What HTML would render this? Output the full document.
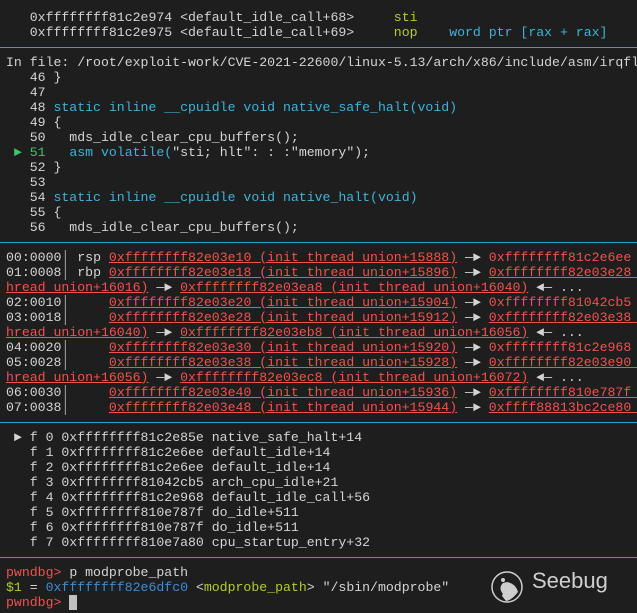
<!DOCTYPE html>
<html><head><meta charset="utf-8"><style>
html,body{margin:0;padding:0;background:#1e1e1e;width:637px;height:613px;overflow:hidden}
#t{position:absolute;left:6px;top:9.5px;right:0;font-family:"Liberation Mono",monospace;font-size:13.2px;line-height:15px;color:#d4d4d4}
.l{height:15px;overflow:hidden;white-space:pre}
.s{height:15px;position:relative;margin-left:-6px}
.s:after{content:"";position:absolute;left:0;right:0;top:7px;height:1px;background:#2aa3cf}
.g{color:#b3cc2e}.c{color:#3db4dc}.gr{color:#3fc86a}.r{color:#f0524f}.u{text-decoration:underline;text-decoration-color:#f0524f}
.b{color:#3a8ed8}
.bar{color:#aaa}
#logo{position:absolute;left:490px;top:570px}
#lt{position:absolute;left:532px;top:568px;font-family:"Liberation Sans",sans-serif;font-size:22px;color:#cfcfcf}
</style></head><body>
<div id="t"><div class="l">   0xffffffff81c2e974 &lt;default_idle_call+68&gt;     <span class="g">sti</span></div><div class="l">   0xffffffff81c2e975 &lt;default_idle_call+69&gt;     <span class="g">nop</span>    <span class="c">word ptr [rax + rax]</span></div><div class="s"></div><div class="l">In file: /root/exploit-work/CVE-2021-22600/linux-5.13/arch/x86/include/asm/irqflags.h</div><div class="l">   46 }</div><div class="l">   47</div><div class="l">   48 <span class="c">static inline __cpuidle void native_safe_halt(void)</span></div><div class="l">   49 {</div><div class="l">   50   mds_idle_clear_cpu_buffers();</div><div class="l"> <span class="gr">► 51</span>   <span class="c">asm volatile(</span>"sti; hlt": : :"memory");</div><div class="l">   52 }</div><div class="l">   53</div><div class="l">   54 <span class="c">static inline __cpuidle void native_halt(void)</span></div><div class="l">   55 {</div><div class="l">   56   mds_idle_clear_cpu_buffers();</div><div class="s"></div><div class="l">00:0000<span class="bar">│</span> rsp <span class="r u">0xffffffff82e03e10 (init_thread_union+15888)</span> —► <span class="r">0xffffffff81c2e6ee (default_idle+14)</span></div><div class="l">01:0008<span class="bar">│</span> rbp <span class="r u">0xffffffff82e03e18 (init_thread_union+15896)</span> —► <span class="r u">0xffffffff82e03e28 (init_t</span></div><div class="l"><span class="r u">hread_union+16016)</span> —► <span class="r u">0xffffffff82e03ea8 (init_thread_union+16040)</span> ◄— ...</div><div class="l">02:0010<span class="bar">│</span>     <span class="r u">0xffffffff82e03e20 (init_thread_union+15904)</span> —► <span class="r">0xffffffff81042cb5 (arch_cpu</span></div><div class="l">03:0018<span class="bar">│</span>     <span class="r u">0xffffffff82e03e28 (init_thread_union+15912)</span> —► <span class="r u">0xffffffff82e03e38 (init_t</span></div><div class="l"><span class="r u">hread_union+16040)</span> —► <span class="r u">0xffffffff82e03eb8 (init_thread_union+16056)</span> ◄— ...</div><div class="l">04:0020<span class="bar">│</span>     <span class="r u">0xffffffff82e03e30 (init_thread_union+15920)</span> —► <span class="r">0xffffffff81c2e968 (default_</span></div><div class="l">05:0028<span class="bar">│</span>     <span class="r u">0xffffffff82e03e38 (init_thread_union+15928)</span> —► <span class="r u">0xffffffff82e03e90 (init_t</span></div><div class="l"><span class="r u">hread_union+16056)</span> —► <span class="r u">0xffffffff82e03ec8 (init_thread_union+16072)</span> ◄— ...</div><div class="l">06:0030<span class="bar">│</span>     <span class="r u">0xffffffff82e03e40 (init_thread_union+15936)</span> —► <span class="r u">0xffffffff810e787f (do_idl</span></div><div class="l">07:0038<span class="bar">│</span>     <span class="r u">0xffffffff82e03e48 (init_thread_union+15944)</span> —► <span class="r u">0xffff88813bc2ce80 ◄— 0x0</span></div><div class="s"></div><div class="l"> ► f 0 0xffffffff81c2e85e native_safe_halt+14</div><div class="l">   f 1 0xffffffff81c2e6ee default_idle+14</div><div class="l">   f 2 0xffffffff81c2e6ee default_idle+14</div><div class="l">   f 3 0xffffffff81042cb5 arch_cpu_idle+21</div><div class="l">   f 4 0xffffffff81c2e968 default_idle_call+56</div><div class="l">   f 5 0xffffffff810e787f do_idle+511</div><div class="l">   f 6 0xffffffff810e787f do_idle+511</div><div class="l">   f 7 0xffffffff810e7a80 cpu_startup_entry+32</div><div class="s"></div><div class="l"><span class="r">pwndbg&gt;</span> p modprobe_path</div><div class="l"><span class="g">$1</span> = <span class="b">0xffffffff82e6dfc0</span> &lt;<span class="g">modprobe_path</span>&gt; "/sbin/modprobe"</div><div class="l"><span class="r">pwndbg&gt;</span> <span style="background:#c0c0c0">&#160;</span></div></div>
<svg id="logo" width="36" height="36" viewBox="0 0 36 36">
<circle cx="17" cy="17" r="15" fill="none" stroke="#cfcfcf" stroke-width="1.5"/>
<path d="M12 26 L17 12 Q26 14 28 22 Q22 30 16 31 Z" fill="#cfcfcf"/>
<path d="M13 24 Q8 18 13 13 L17 12 Z" fill="#cfcfcf"/>
<circle cx="13" cy="10" r="2" fill="#cfcfcf"/>
</svg>
<div id="lt">Seebug</div>
</body></html>
